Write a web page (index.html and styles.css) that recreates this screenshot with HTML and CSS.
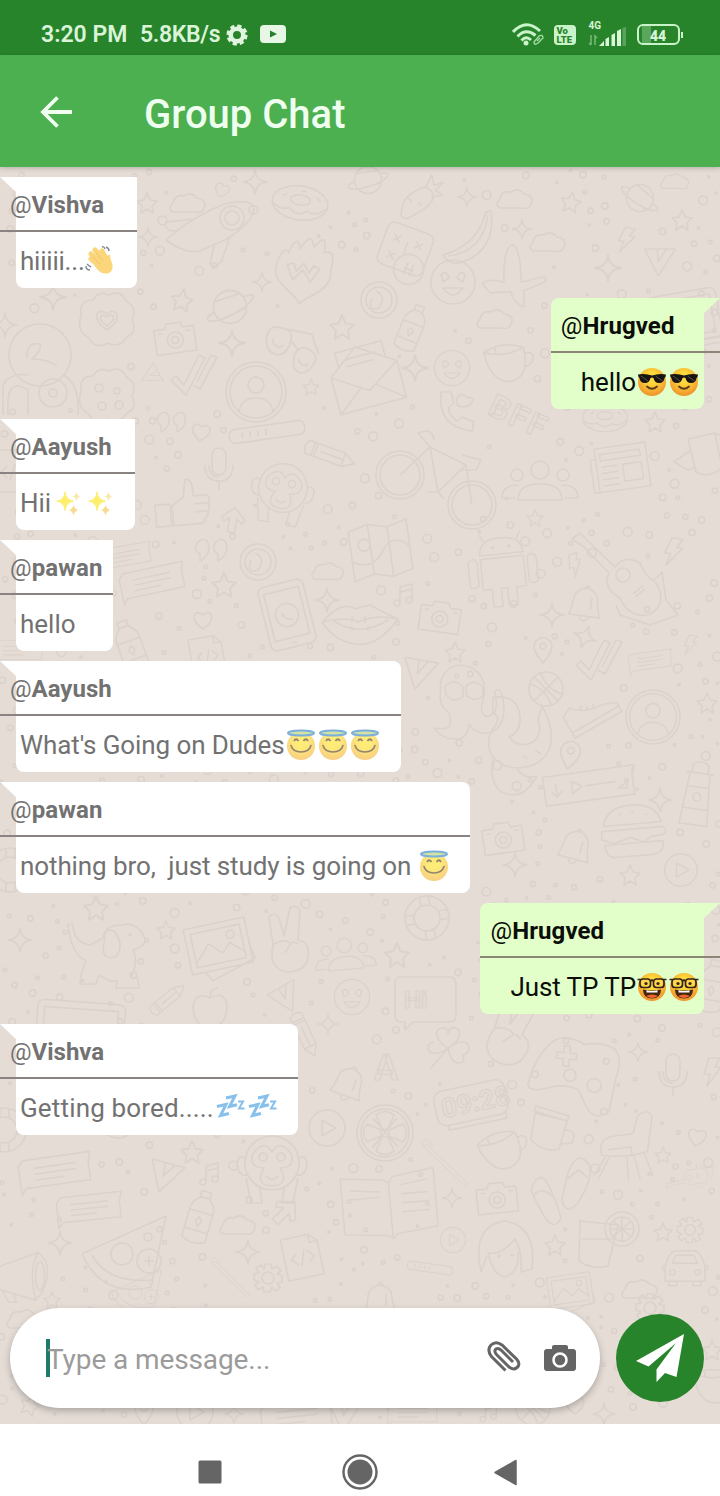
FILE: index.html
```html
<!DOCTYPE html>
<html lang="en">
<head>
<meta charset="utf-8">
<title>Group Chat</title>
<link rel="stylesheet" href="styles.css">
</head>
<body>
<svg class="defs" width="0" height="0" aria-hidden="true">
  <defs>
    <radialGradient id="skin" cx=".5" cy=".35" r=".65"><stop offset=".3" stop-color="#ffd93b"/><stop offset="1" stop-color="#f0922b"/></radialGradient>
    <radialGradient id="skinSoft" cx=".5" cy=".35" r=".65"><stop offset=".3" stop-color="#ffe227"/><stop offset="1" stop-color="#f5b035"/></radialGradient>
    <symbol id="cool" viewBox="0 0 32 32">
      <circle cx="16" cy="16" r="14" fill="url(#skin)"/>
      <path d="M2 8.500Q9 7 16 9.500Q23 7 30 8.500L29.500 11L28.500 12Q28 17 23 17Q18.500 17 17.500 12L16 11.500L14.500 12Q13.500 17 9 17Q4 17 3.500 12L2.500 11Z" fill="#171412"/>
      <path d="M5 10L12 15M19.500 10L26.500 15" stroke="#555" stroke-width="1"/>
      <path d="M11 20.500Q16 25 21 20.500" fill="none" stroke="#5b3b1c" stroke-width="1.800" stroke-linecap="round"/>
    </symbol>
    <symbol id="nerd" viewBox="0 0 32 32">
      <circle cx="16" cy="16" r="14" fill="url(#skin)"/>
      <path d="M7 18.500Q16 20.500 25 18.500Q25 27.500 16 27.500T7 18.500Z" fill="#45250f"/><path d="M10.500 19.300Q16 20.500 21.500 19.300V21.500H10.500Z" fill="#fff"/><path d="M10 25Q16 22 22 25Q16 29 10 25Z" fill="#f0642e"/>
      <g fill="#ffd54a" stroke="#33241c" stroke-width="1.700"><rect x="4" y="8" width="10.500" height="8.500" rx="3"/><rect x="17.500" y="8" width="10.500" height="8.500" rx="3"/><path d="M14.500 10Q16 8.500 17.500 10M1.500 8.500H5M27 8.500H30.500" fill="none"/></g>
      <circle cx="10" cy="12.500" r="1.600" fill="#33241c"/><circle cx="22" cy="12.500" r="1.600" fill="#33241c"/>
    </symbol>
    <symbol id="halo" viewBox="0 0 32 32">
      <circle cx="16" cy="17" r="14" fill="url(#skinSoft)"/>
      <ellipse cx="16" cy="4" rx="13" ry="2.600" fill="#b7d46a" stroke="#2f7fc8" stroke-width="2"/>
      <path d="M9 12Q11 8.500 13.500 12M18.500 12Q21 8.500 23 12" fill="none" stroke="#4f3a14" stroke-width="1.800"/>
      <path d="M6 16.500Q8 23 16 23T26 16.500" fill="none" stroke="#4f3a14" stroke-width="1.600" stroke-linecap="round"/>
    </symbol>
    <symbol id="wave" viewBox="0 0 32 32">
      <g stroke="#f9bd28" stroke-width="5" stroke-linecap="round"><path d="M6 14L15 22M6 9L19 21M10 5L22 19M17 6L23 17"/></g>
      <path d="M11 14L21 13Q24 8 25 10Q25 14 27 18Q29 25 24 28Q17 30 12 24L7 17Z" fill="#fbbd2a"/>
      <path d="M8 12L15 19M11 8L18 16" stroke="#e99c20" stroke-width="1"/>
      <path d="M17 2Q19 1 20 4M21 2Q24 3 24 6M1 21Q1 25 5 25M2 19Q4 21 6 22" stroke="#3c4654" stroke-width="1.500" fill="none"/>
    </symbol>
    <symbol id="spark" viewBox="-4 -1 34 34">
      <path d="M11 4Q12 13 20 14Q12 15 11 24Q10 15 2 14Q10 13 11 4Z" fill="#fbe619" stroke="#fbe619" stroke-width="1"/>
      <path d="M20 18Q21 22.500 25 23.500Q21 25 20 29Q19 25 15 23.500Q19 22.500 20 18Z" fill="#f3c64a"/><path d="M23 4Q23.500 8 27 9Q23.500 10 23 14Q22.500 10 19 9Q22.500 8 23 4Z" fill="#f3dc7a"/>
    </symbol>
    <symbol id="zzz" viewBox="0 0 32 32">
      <g fill="none" stroke="#3f9be0"><path d="M3 14.500L12 12.500L6.500 23.500L15 21.500" stroke-width="3"/><path d="M12 6L21 4L15.500 14.500L23 12.800" stroke-width="3"/><path d="M24 9.500H29L25 16.500H30.500" stroke-width="2"/></g>
    </symbol>

    <g id="d-star"><path d="M0-10L3-3L10-2L5 3L6 10L0 6L-6 10L-5 3L-10-2L-3-3Z"/></g>
    <g id="d-twinkle"><path d="M0-12Q1-1 12 0Q1 1 0 12Q-1 1-12 0Q-1-1 0-12Z"/></g>
    <g id="d-cloud"><path d="M-15 8Q-21 5-15-1Q-13-10-4-8Q3-13 9-6Q20-4 16 4Q14 10 6 8Z"/></g>
    <g id="d-heart"><path d="M0 9C-15-1-8-12 0-5C8-12 15-1 0 9Z"/></g>
    <g id="d-camera"><path d="M-20-10H-9L-7-15H7L9-10H20V15H-20Z"/><circle cy="2" r="8"/><circle cy="2" r="3.500"/><path d="M12-6H17M-16-6H-12"/></g>
    <g id="d-planet"><circle r="15"/><path d="M-14 4C-30 15-14 16 4 6C22-4 28-16 12-9M-13-5L8-12M-9 12L14 1"/></g>
    <g id="d-note"><path d="M-5 8V-8L7-11V5M-5-3L7-6"/><circle cx="-8" cy="8" r="3"/><circle cx="4" cy="5" r="3"/></g>
    <g id="d-bolt"><path d="M-3-14H8L3-5H9L-5 14L-2 2H-8Z"/></g>
    <g id="d-person"><circle r="30"/><circle r="26"/><circle cy="-7" r="8"/><path d="M-17 19Q-14 6 0 6T17 19"/></g>
    <g id="d-people"><circle cy="-12" r="9"/><path d="M-22 18Q-22 2 0 2T22 18Z"/><circle cx="-23" cy="-7" r="6"/><circle cx="23" cy="-7" r="6"/><path d="M-24 16H-38Q-38 3-22 3M24 16H38Q38 3 22 3"/></g>
    <g id="d-checks"><path d="M-24 5L-19 1L-11 10L4-20L10-17L-9 20ZM-2 10L5 14L22-18L16-20L2 7"/></g>
    <g id="d-chat"><path d="M-34-14H34L31-4V14H-34L-39 20V-8Z"/><path d="M-24-5H18M-24 1H18M-24 7H5"/></g>
    <g id="d-pencil"><path d="M-24-7H14L26 0L14 7H-24Q-29 0-24-7ZM14-7V7M-15-7V7M-18-7V7M14 0H-10"/></g>
    <g id="d-mic"><rect x="-7" y="-20" width="14" height="27" rx="7"/><path d="M-14-3Q-14 13 0 13T14-3M-10-3Q-10 9 0 9M0 13V22"/></g>
    <g id="d-thumb"><path d="M-10 0L2-8L5-25Q13-27 12-8H26Q30-4 26 0Q29 4 25 8Q27 12 22 15Q22 20 15 20H-10ZM-27-2H-12V20H-27ZM12 0H26M13 8H25"/></g>
    <g id="d-monkey"><circle r="27"/><path d="M-26-4C-38-14-38 15-25 12M26-4C38-14 38 15 25 12M-20-8Q-8-25 0-11Q8-25 20-8Q22 5 8 5Q18 22 0 23Q-18 22-8 5Q-22 5-20-8Z"/><circle cx="-9" cy="-6" r="4"/><circle cx="9" cy="-6" r="4"/><path d="M-6 13Q0 20 6 13M-26 15L-21 40H-10L-12 24M26 15L21 40H10L12 24"/></g>
    <g id="d-smile"><circle r="22"/><path d="M-12-7Q-7-13-4-4L-10 0ZM12-7Q7-13 4-4L10 0ZM-10 6Q0 20 10 6Z"/></g>
    <g id="d-cookie"><path d="M-26-5Q-28-20-14-20Q-8-30 2-25Q14-31 19-19Q31-13 25 0Q31 12 20 17Q12 29 1 23Q-12 30-18 18Q-31 12-26-5Z"/><circle cx="-8" cy="-8" r="4"/><circle cx="10" cy="-5" r="3"/><circle cx="-5" cy="10" r="4"/><circle cx="12" cy="9" r="4"/></g>
    <g id="d-badge"><path d="M-26-5Q-28-20-14-20Q-8-30 2-25Q14-31 19-19Q31-13 25 0Q31 12 20 17Q12 29 1 23Q-12 30-18 18Q-31 12-26-5Z"/><path d="M0 10C-18-2-9-14 0-6C9-14 18-2 0 10ZM0 6C-11-2-6-8 0-3C6-8 11-2 0 6Z"/></g>
    <g id="d-rocket"><path d="M-44 18Q-20-4 14-18Q42-24 44-14Q44 0 15 18L-8 28Q-22 34-44 18ZM-16-3L-44 0Q-47 3-40 9L-30 8M4 24L0 42Q5 48 12 38L20 15"/><circle cx="22" cy="-4" r="12"/><circle cx="22" cy="-4" r="7"/></g>
    <g id="d-donut"><ellipse rx="28" ry="17"/><ellipse cy="-3" rx="10" ry="5"/><path d="M-27 3Q-18 10-10 6Q0 15 8 7Q18 12 27 2M-18-5L-14-8M16-8L20-4M0-12H5"/></g>
    <g id="d-flame"><path d="M-24-5Q-20-20-15-14Q-10-33-5-19Q3-37 7-22Q18-39 17-18Q28-24 25-4C30 16 5 23 1 31C-5 20-30 16-24-5Z"/><path d="M-15-3L-8 10L0 0L8 10L15-3L9-5L6 2L0-6L-6 2L-9-5Z"/></g>
    <g id="d-glasses"><path d="M-24-5Q-24-18-12-16Q0-16-2-4Q-4 8-12 9Q-24 8-24-5ZM3 9Q5-4 16 0Q27 5 20 16Q12 27 4 18ZM-2-6L6 2M-16-16L16-14L25 3M-18-5A6 6 0 0 0-8 0M8 10A5 5 0 0 0 17 13"/></g>
    <g id="d-envelope"><path d="M-34-8L-3-32L34-8V30H-34ZM-34-8L0 14L34-8M-34 30L-7 9M34 30L7 9M-24-16V-31H24V-16M-16-22H15M-16-15H12"/></g>
    <g id="d-carrot"><path d="M-20-3Q-12-13 8-9Q18-5 12 6Q4 12-20 8Q-29 5-20-3ZM12-7L24-14L20-4L29-1L18 1L21 9L11 4M-8-8V-3M-2 6V1"/></g>
    <g id="d-banana"><path d="M-25 20Q10 10 18-23L23-24Q28 11 0 25Q-18 33-25 20ZM-20 21Q15 17 20-20"/></g>
    <g id="d-plane"><path d="M-31 12Q-24 5-10 7Q-17-28-8-31Q0-31 7 4L25-4Q34-6 30 0L11 12L14 28Q4 26-2 15L-22 20Z"/></g>
    <g id="d-dice"><rect x="-24" y="-23" width="48" height="44" rx="7"/><path d="M-15-12L-8-5M-8-12L-15-5M8-12L15-5M15-12L8-5M-15 6L-8 13M-8 6L-15 13M0-8V6"/><circle cx="10" cy="17" r="15"/><path d="M7 11V23M13 11V23M5 17H15"/></g>
    <g id="d-watch"><circle r="18"/><circle r="13"/><path d="M-3-9Q8-4 0 8Q-12 12-7-2"/></g>
    <g id="d-bottle"><path d="M-5-25H5V-18Q12-13 12-5V24Q0 31-12 24V-5Q-12-13-5-18ZM-5-19H5M-12-4H12M-12 15H12"/><path d="M0 1L3 5L0 11L-3 5Z"/></g>
    <g id="d-cup"><path d="M-20-12Q0-22 20-12Q24 17 4 20Q-16 20-20-12ZM-20-12Q0-4 20-12M21-6Q32-7 27 3Q24 8 17 7M-8-8V-15"/></g>
    <g id="d-phone"><path d="M-16-20Q-20 15 15 19L17 10L5 5L0 9Q-10 1-8-5L-3-9L-6-20Z"/><path d="M0-14Q6-21 10-14Q19-16 14-8Q7-3 0-7Z"/></g>
    <g id="d-bike"><circle cx="-36" cy="0" r="24"/><circle cx="-36" cy="0" r="20"/><circle cx="36" cy="30" r="24"/><circle cx="36" cy="30" r="20"/><path d="M-36 0L-6-28L2 17L30-10L-6-28L-18-42Q-3-48-2-35M30-10L36 30M26-20L45-15L40-5H23M2 17H-8M2 17L8 24"/></g>
    <g id="d-news"><path d="M-28-24H29V25H-28ZM-28-12H-34V25H-28M-23-17H22V-10H-23ZM1-3H22V16H1ZM-23-3H-5M-23 4H-5M-23 11H-5M-23 18H-5"/></g>
    <g id="d-can"><path d="M-12-16L15-22L22 13Q8 24-4 17ZM-9-5L-26 7L-12 15L-4 12M13-22Q28-20 23-2"/></g>
    <g id="d-tablet"><rect x="-22" y="-31" width="44" height="62" rx="6"/><rect x="-17" y="-24" width="34" height="46"/><circle r="11"/><path d="M-5-3Q-2 5 5 5M-2 27H3"/></g>
    <g id="d-lips"><path d="M-38 0Q-18-22-5-13Q0-15 10-17Q24-9 38-3Q18 25-4 22Q-25 20-38 0ZM-38 0Q-12-6-2 0Q15-8 38-3M-26-1Q0 16 28-2M-8-6V0M5-6V1M-8 5V9M8 4V9"/></g>
    <g id="d-map"><path d="M-29-22L-9-27L10-22L30-27V23L10 28L-9 23L-29 28ZM-9-27V23M10-22V28M-29 8Q-10 20 2 2T30 0"/><circle cx="-15" cy="-7" r="6"/></g>
    <g id="d-robot"><path d="M-24-18Q-24-36 0-36T24-18ZM-18-33L-23-42M18-33L23-42M-24-14H24V20H13V40H3V20H-4V40H-14V20H-24ZM-38-12Q-32-18-28-12V15Q-33 20-38 15ZM38-12Q32-18 28-12V15Q33 20 38 15Z"/><circle cx="-9" cy="-26" r="1"/><circle cx="9" cy="-26" r="1"/></g>
    <g id="d-guitar"><path d="M-48-41L-40-47L-31-38L-5-13Q4-26 20-17Q24-5 36 3Q48 22 31 34Q10 40 0 18Q-18 8-11-7L-36-33ZM34 0L42-8L46 20L58 35L30 45L0 35L-4 25"/><circle cx="3" cy="-5" r="7"/><path d="M13 14L23 6M15 17L25 9"/></g>
    <g id="d-bell"><path d="M-15 11Q-12 0-12-6Q-11-15 0-17Q11-15 12-6Q12 0 16 11ZM-4 12Q0 20 5 12M-2-17Q0-22 3-17M6-8V4"/></g>
    <g id="d-cone"><path d="M-17-10L17-10L-2 20ZM-3-10L-2 4L7-10"/></g>
    <g id="d-ball"><circle r="17"/><path d="M-16-5Q0 0 5 16M-5-16Q0 0 16 5M-12 12L12-12M-12-12L12 12"/></g>
    <g id="d-pin"><path d="M0 13C-9 2-11-3-7-9Q0-16 7-9C11-3 9 2 0 13Z"/><circle cy="-4" r="3"/></g>
    <g id="d-shoe"><path d="M-27 10V-7L-17-12Q-7 0 10 1Q27 4 27 10V17H-27ZM-27 11H27M-9-5L-5-8M-3-2L0-5M4 0L6-4"/></g>
    <g id="d-octo"><path d="M-25-10C-29-48 23-48 24-11C23 4 16 10 25 18Q42 18 35-9Q40-15 43-7C55 37 21 47 7 27Q5 42-5 43Q-22 45-32 31Q-7 36-16 14Q-28 5-25-10ZM-20-15Q-10-26 0-14V-4Q-10 5-19-6ZM3-15Q13-25 22-14V-4Q12 3 4-5Z"/><circle cx="-7" cy="-27" r="2"/><circle cx="8" cy="-29" r="3"/></g>
    <g id="d-squid"><path d="M-30-35Q-5-38-3-15Q-2 0-14 5Q-4 17 10 10Q20 3 15-12L19-26Q30-8 28 12Q22 34-4 36Q-20 36-30 25Q-40 10-28-6Q-22-14-30-20ZM-30 27Q-34 50-22 60Q0 70 14 44Q2 48-6 37M0 23L4 27M12 18L18 22"/></g>
    <g id="d-voice"><path d="M-46-14H46L43-5V15H-46ZM-34-6V7M-39 2L-34 8L-29 2M-18-6V6L-8 0ZM-5 0H26M28 7L38 1L36 8Z"/></g>
    <g id="d-burger"><path d="M-29-8Q-25-27 0-27T29-8ZM-31-3H30Q36 2 29 5L18 6L10 11L-3 5L-20 10L-32 5ZM-29 11H29Q30 23 18 24H-19Q-29 24-29 11Z"/><path d="M-13-18L-10-20M0-19L3-21M13-17L16-16"/></g>
    <g id="d-tower"><path d="M-10-22H10L14 30H-14ZM-8-30Q0-37 8-30V-22H-8ZM-14-22H14M-11-8H11M-13 14H13"/><circle cy="2" r="4"/></g>
    <g id="d-dog"><path d="M-37-27Q-34 2-19 9Q-25 22-25 32H-9L-6 23L5 29H12L11 36H34L33 27L26 25Q34 9 28-2Q44-7 39-16Q31-31 16-27Q0-27-2-14L-15-7Q-32-10-32-28Z"/><path d="M0-15Q0-26 10-20Q19-8 12 4Q0 9-2-2Z"/><circle cx="25" cy="-17" r="1"/></g>
    <g id="d-photo"><path d="M-31-22H31V24H-31ZM-25-16H25V18H-25ZM-25 14L-9-3L3 9L12 0L25 12M-18 24L-12 34L34 20L31 8"/><circle cx="14" cy="-8" r="4"/></g>
    <g id="d-peace"><path d="M-15 5L-19-23Q-14-29-9-22L-4-4L2-32Q8-36 12-30L10 0Q23 2 20 18Q17 32-1 32Q-20 29-15 5ZM-15 5Q-5-2 3 3L-3 13M4 2L11 4"/></g>
    <g id="d-apple"><path d="M0-10Q16-18 17-1Q16 15 5 19L0 17L-6 19Q-17 14-17-2Q-14-17 0-10ZM0-10Q0-20 8-20"/></g>
    <g id="d-play"><circle r="18"/><path d="M-5-8V8L9 0Z"/></g>
    <g id="d-laptop"><path d="M-44-23Q-44-30-36-30H36Q44-30 44-23V25H-44ZM-37-23H37V19H-37ZM-53 26H53V32H-53Z"/></g>
    <g id="d-pizza"><path d="M-44 2L36-34L21 37Q-26 48-46 8Q-49 2-44 2ZM-38 5Q-22 34 22 30"/><circle cx="-8" cy="4" r="11"/><circle cx="19" cy="11" r="12"/><circle cx="18" cy="-13" r="4"/><path d="M14 11H24M19 6V16"/></g>
    <g id="d-doc"><path d="M-18-20H10L18-12V22H-18ZM10-20V-12H18M-5-4L-11 2L-5 8M6-4L12 2L6 8M3-6L-2 10"/></g>
    <g id="d-gear"><circle r="6"/><path d="M-3-14H3L4-9L9-12L13-7L9-4L14-2V4L9 5L12 10L7 13L4 9L2 14H-4L-5 9L-10 12L-13 7L-9 4L-14 2V-4L-9-5L-12-10L-7-13L-4-9Z"/></g>
    <g id="d-horn"><path d="M-29-8L18-25Q31-15 28 2T15 28L-28 15ZM18-25Q7-8 15 28M-22 17L-15 30H-6L-10 21"/><ellipse cx="20" cy="1" rx="5" ry="16"/></g>
    <g id="d-buoy"><circle r="22"/><circle r="13"/><path d="M-4-22V-12M5-21V-12M-4 12V22M5 12V21M-21-5H-12M12-5H21M-12 4H-21M12 4H21"/></g>
    <g id="d-hi"><path d="M-25-25H24Q31-25 31-18V13Q31 20 24 20H-12L-20 28V20H-25Q-30 20-30 13V-18Q-30-25-25-25Z"/></g>
    <g id="d-clover"><path d="M0 0C-12-6-15-19-6-20Q0-21 0-14Q1-22 8-20C15-17 11-6 0 0ZM0 0C10-8 21-8 21 0Q21 6 15 7Q18 15 10 15C3 14 1 7 0 0C-9 8-20 6-20 0Q-20-5-14-6M0 0L-17 20"/></g>
    <g id="d-clock"><rect x="-37" y="-18" width="72" height="35" rx="9"/><path d="M-28 17V22H31V14"/></g>
    <g id="d-pad"><path d="M-24-34Q-11-39 4-31Q18-35 33-30Q44-22 38 0L34 34Q20 45 11 31L2 15Q-15 9-30 16Q-50 22-49 12Q-42-22-24-34Z"/><path d="M-16-28V-21H-23V-15H-16V-8H-10V-15H-3V-21H-10V-28Z"/><circle cx="-8" cy="1" r="6"/><circle cx="17" cy="9" r="7"/><circle cx="27" cy="-16" r="3"/></g>
    <g id="d-orange"><circle r="28"/><circle r="24"/><path d="M-3-4L-9-18Q0-25 9-18L3-4ZM-3 4L-9 18Q0 25 9 18L3 4ZM-4-3L-18-9Q-25 0-18 9L-4 3ZM4-3L18-9Q25 0 18 9L4 3ZM-12-15L13 14M12-15L-13 15"/></g>
    <g id="d-mug"><path d="M-17-17L15-9L7 19Q-8 23-21 10ZM-16-24L17-14L15-9L-18-19ZM13 0Q26 0 20 13L8 14"/></g>
    <g id="d-chair"><path d="M-27 2Q-27-10-13-12L9-15L14-35Q27-44 30-33L25 5Q0 13-26 9ZM-17 11L-30 36M-22 11L-35 33M2 11L4 37M10 9L17 36M21 6L31 32M-19 3L7 0L8 9"/></g>
    <g id="d-brush"><path d="M-34-34L36 34L31 38L-39-29ZM-39-29L-42-35L-35-41L-23-31"/></g>
    <g id="d-flip"><path d="M-27 0Q-19-23-9-4Q0 16 3 28Q-4 42-14 26Q-22 12-27 0ZM-24 5Q-17-4-6 6M9-14Q19-44 32-24Q34-8 19 14Q7 26 4 9ZM10-12L21-20L29-13"/></g>
    <g id="d-book"><path d="M-53-30L-5-25L0-21L5-28L51-34V31L5 36L0 41L-5 37L-53 32ZM0-21V41M13-18L43-22M13-8H43M13 2H43M13 12H43M-43-16L-10-12M-43-6H-10"/></g>
    <g id="d-girl"><path d="M-24 22Q-34-24 0-29Q32-24 27 19L16 22Q18 2 10-11Q-4 6-17 3Q-12 25 0 27Q15 22 13 2M-18 6L-24 22"/><circle cx="-6" cy="6" r="1"/><circle cx="7" cy="5" r="1"/></g>
    <g id="d-glass"><path d="M-20-22L18-18L8 23Q-9 27-21 18ZM-18-4H14"/><circle cx="22" cy="-14" r="17"/><circle cx="22" cy="-14" r="12"/><path d="M22-26V-2M10-14H34M13-22L31-6M31-22L13-6"/></g>
    <g id="d-car"><path d="M-22 17H22V0Q18-15 11-17H-11Q-18-15-22 0ZM-14-3H14L10-12H-10ZM-21 0Q-30-3-22 7M21 0Q30-3 22 7M-18 17V22H-9V17M18 17V22H9V17"/><circle cx="-14" cy="7" r="3"/><circle cx="14" cy="7" r="3"/></g>
    <g id="d-quote"><path d="M-15-7Q-5-16-3-3Q-3 6-12 11L-12 4Q-19 0-15-7ZM3-7Q13-16 15-3Q15 6 6 11V4Q-1 0 3-7Z"/></g>
    <g id="d-arrow"><path d="M-4 14V-2L-10 3L-13-2L0-14L13-2L10 3L4-2V14Z"/></g>
    <g id="d-pass"><rect x="-38" y="-7" width="76" height="14" rx="6"/><path d="M-25-3V3M-17-3V3M-9-3V3M-1-3V3"/></g>
  </defs>
</svg>

<div class="phone">
  <header class="status">
    <span class="time">3:20 PM</span>
    <span class="rate">5.8KB/s</span>
    <svg class="gear" width="22" height="22" viewBox="-11 -11 22 22"><circle r="6.300" fill="none" stroke="#e0f5df" stroke-width="4.600"/><circle r="9" fill="none" stroke="#e0f5df" stroke-width="3.200" stroke-dasharray="4.200 2.869"/></svg>
    <svg class="video" width="26" height="18" viewBox="0 0 26 18"><rect width="26" height="18" rx="4" fill="#e6f7e6"/><path d="M10 5.500L17 9L10 12.500Z" fill="#287f2a"/></svg>
    <svg class="wifi" width="32" height="24" viewBox="0 0 32 24"><g fill="none" stroke="#c9f3c8" stroke-width="3"><path d="M1 9Q14-5 28 8"/><path d="M5.500 13.500Q14 4.500 23.500 12.500"/><path d="M9.500 17.500Q14 12.500 19 17"/></g><circle cx="14" cy="20" r="2.500" fill="#c9f3c8"/><path d="M22 19L27 13Q31 11 31 15L26 20Q22 23 22 19ZM25 18L28 15" fill="#28842b" stroke="#9edb9e" stroke-width="1.400"/></svg>
    <span class="volte"><span>Vo</span><span>LTE</span></span>
    <span class="signal"><span class="net">4G</span>
      <svg width="38" height="20" viewBox="0 0 38 20"><path d="M3 8V18M1 16L3 18M7 18V9L9 11" stroke="#78b97a" stroke-width="1.500" fill="none"/><g fill="#d8f8d8"><path d="M11 19L16 14V19Z"/><path d="M17.500 12L21 10V19H17.500ZM23.500 8L27 6V19H23.500ZM29 4L33 2V19H29Z"/></g><path d="M34.500 1L38 0V19H34.500Z" fill="#58a45b"/></svg></span>
    <span class="battery"><b>44</b></span><i class="cap"></i>
  </header>

  <div class="appbar">
    <svg width="32" height="32" viewBox="0 0 32 32" fill="none" stroke="#f0fff0" stroke-width="3.800"><path d="M32 16H3M17.500 1.500L3 16L17.500 30.500"/></svg>
    <h1>Group Chat</h1>
  </div>

  <main class="chat">
    <svg class="wallpaper" id="wallpaper" width="720" height="1257" viewBox="0 167 720 1257" aria-hidden="true"></svg>
    <section class="thread">
      <article class="msg in square tight"><h2><i>@</i>Vishva</h2><p><span>hiiiii...</span><svg><use href="#wave"/></svg></p></article>
      <article class="msg out"><h2><i>@</i>Hrugved</h2><p><span>hello</span><svg><use href="#cool"/></svg><svg><use href="#cool"/></svg></p></article>
      <article class="msg in square"><h2><i>@</i>Aayush</h2><p><span>Hii</span><svg><use href="#spark"/></svg><svg><use href="#spark"/></svg></p></article>
      <article class="msg in square"><h2 class="spaced"><i>@</i>pawan</h2><p><span>hello</span></p></article>
      <article class="msg in snug"><h2><i>@</i>Aayush</h2><p><span>What's Going on Dudes</span><svg><use href="#halo"/></svg><svg><use href="#halo"/></svg><svg><use href="#halo"/></svg></p></article>
      <article class="msg in snug"><h2 class="spaced"><i>@</i>pawan</h2><p><span>nothing bro,&nbsp; just study is going on&nbsp;</span><svg><use href="#halo"/></svg></p></article>
      <article class="msg out"><h2><i>@</i>Hrugved</h2><p><span>Just TP TP</span><svg><use href="#nerd"/></svg><svg><use href="#nerd"/></svg></p></article>
      <article class="msg in loose"><h2><i>@</i>Vishva</h2><p><span>Getting bored.....</span><svg><use href="#zzz"/></svg><svg><use href="#zzz"/></svg></p></article>
    </section>
    <footer class="composer">
      <div class="field">
        <i class="caret"></i><span class="hint">Type a message...</span>
        <svg class="clip" width="34" height="32" viewBox="0 0 34 32" fill="none" stroke="#656565" stroke-width="3" stroke-linecap="butt"><path d="M18.500 29.500L4.500 15.500Q-.5 9 4 4Q9-.5 15 4L29.500 18Q34 23 30 26.500Q26 30 21 25L9.500 13.500Q6.500 10 9 8Q11.500 6.500 14.500 9.500L26 21"/></svg>
        <svg class="cam" width="32" height="26" viewBox="0 0 32 26"><path d="M3 4H8V2Q8 0 10 0H22Q24 0 24 2V4H29Q32 4 32 7V23Q32 26 29 26H3Q0 26 0 23V7Q0 4 3 4Z" fill="#656565"/><circle cx="16" cy="15" r="6.500" fill="#656565" stroke="#fff" stroke-width="2.600"/></svg>
      </div>
      <div class="send"><svg width="48" height="48" viewBox="0 0 48 48"><path d="M48 0L0 27L12.500 32.500L40 9L20.500 35.500V48L29 39L40.500 43Z" fill="#fff"/></svg></div>
    </footer>
  </main>

  <nav class="keys">
    <svg width="24" height="24" viewBox="0 0 24 24"><rect x=".5" y=".5" width="23" height="23" rx="1.500" fill="#656565"/></svg>
    <svg class="home" width="36" height="36" viewBox="0 0 36 36"><circle cx="18" cy="18" r="16.500" fill="none" stroke="#656565" stroke-width="2.400"/><circle cx="18" cy="18" r="12.500" fill="#656565"/></svg>
    <svg width="24" height="27" viewBox="0 0 24 27"><path d="M1 13.500L22 1.500V25.500Z" fill="#656565" stroke="#656565" stroke-width="1.500" stroke-linejoin="round"/></svg>
  </nav>
</div>
<script src="wallpaper.js"></script>
</body>
</html>
```

FILE: styles.css
```css
* { box-sizing: border-box; }
body { margin: 0; font-family: Roboto, "Noto Sans", sans-serif; background: #fff; }
h1, h2, p { margin: 0; font-weight: normal; }
i { font-style: normal; }
.defs { position: absolute; }
.phone { width: 720px; height: 1496px; display: flex; flex-direction: column; overflow: hidden; }

.status { height: 55px; background: #28842b; display: flex; align-items: center; padding: 14px 39px 0 41px; color: #d9f4d8; font-size: 23px; font-weight: 600; white-space: nowrap; }
.time { width: 99px; }
.rate { width: 84px; letter-spacing: -.35px; }
.gear { margin-left: 2px; }
.video { margin-left: 12px; margin-top: -2px; }
.wifi { margin-left: auto; margin-right: 10px; }
.volte { width: 22px; height: 20px; border-radius: 4px; background: #c9f3c8; color: #28842b; display: flex; flex-direction: column; font-size: 9.500px; line-height: 9px; font-weight: 900; padding: 1px 0 0 3px; }
.signal { width: 38px; height: 30px; margin: -8px 11px 0 12px; display: flex; flex-direction: column; }
.net { font-size: 10px; line-height: 10px; font-weight: 700; padding-left: 1px; height: 15px; padding-top: 5px; }
.signal svg { display: block; margin-top: -4px; flex: none; }
.battery { width: 43px; height: 21px; border: 2.500px solid #c9f3c8; border-radius: 6px; display: grid; place-items: center; font-size: 14px; line-height: 18px; padding-top: 1px; background: linear-gradient(90deg, transparent 3px, #5aa65c 3px, #5aa65c 12px, transparent 12px); }
.cap { width: 2.500px; height: 6px; background: #c9f3c8; margin: 0 -2px 0 1px; }

.appbar { height: 112px; background: #4caf50; display: flex; align-items: center; padding: 1px 40px 0; position: relative; z-index: 1; box-shadow: 0 1px 5px rgba(0, 0, 0, .22); }
.appbar h1 { margin-left: 72px; padding-top: 6px; font-size: 40px; font-weight: 500; line-height: 48px; color: #efffef; }

.chat { height: 1257px; background: #e5dcd6; display: flex; flex-direction: column; justify-content: space-between; position: relative; overflow: hidden; }
.wallpaper { position: absolute; inset: 0; fill: none; stroke: #dbd2cb; stroke-width: 1.600; stroke-linejoin: round; font-family: Roboto, sans-serif; }
.thread { position: relative; padding-top: 10px; display: flex; flex-direction: column; align-items: flex-start; gap: 10px; }

.msg { height: 111px; position: relative; display: flex; flex-direction: column; color: #727272; isolation: isolate; }
.msg::before, .msg::after { content: ""; position: absolute; z-index: -1; background: #fff; }
.msg::before { inset: 0 0 0 16px; border-radius: 0 8px 8px 8px; }
.msg::after { top: 0; left: 0; width: 17px; height: 16px; clip-path: polygon(0 0, 100% 0, 100% 100%); }
.msg.square::before { border-top-right-radius: 1px; }
.msg h2 { height: 55px; border-bottom: 2px solid #898482; padding: 2px 10px 0; font-size: 24px; font-weight: 700; line-height: 53px; white-space: nowrap; }
.msg h2.spaced { letter-spacing: .15px; }
.msg h2 i { font-weight: 400; }
.msg p { height: 56px; padding: 1px 20px 0; display: flex; align-items: center; font-size: 26px; line-height: 56px; white-space: nowrap; }
.msg p span { padding-top: 1px; }
.msg p svg { width: 32px; height: 32px; flex: none; opacity: .62; }
.msg.tight p { letter-spacing: -.22px; }
.msg.snug p { letter-spacing: -.1px; }
.msg.loose p { letter-spacing: .16px; }
.msg.out { align-self: flex-end; color: #0b0d09; }
.msg.out::before, .msg.out::after { background: #e2ffc9; }
.msg.out::before { inset: 0 16px 0 0; border-radius: 8px 0 8px 8px; }
.msg.out::after { left: auto; right: 0; clip-path: polygon(0 0, 100% 0, 0 100%); }
.msg.out h2 { border-color: #8a8779; letter-spacing: .1px; }
.msg.out p { padding-left: 30px; letter-spacing: -.08px; }
.msg.out p svg { opacity: 1; }

.composer { position: relative; height: 116px; padding: 0 16px 16px 10px; display: flex; align-items: center; justify-content: space-between; }
.field { width: 590px; height: 100px; border-radius: 50px; background: #fff; display: flex; align-items: center; padding: 0 24px 0 36px; box-shadow: 0 3px 7px rgba(0, 0, 0, .25); }
.caret { width: 4px; height: 38px; background: #1d7c69; }
.hint { color: #9b9b9b; font-size: 28px; letter-spacing: -.1px; margin-left: -3px; padding-top: 2px; }
.clip { margin-left: auto; margin-right: 23px; margin-top: -3px; }
.send { width: 88px; height: 88px; border-radius: 50%; background: #28842b; display: grid; place-items: center; }

.keys { height: 72px; background: #fff; display: flex; align-items: center; padding: 24px 202px 0 198px; justify-content: space-between; }
.home { margin-left: 3px; }
```

FILE: wallpaper.js
```js
// Doodles as: shape, x, y, scale, rotation
const doodles = `
cloud 188 204 1 0|rocket 210 222 1 0|heart 222 190 .8 20|star 147 203 1 0|star 182 300 1.1 10|donut 300 203 1 8|twinkle 255 182 1 0
twinkle 262 282 .8 0|twinkle 148 237 .8 0|flame 303 270 1.1 8|planet 230 307 1.1 0|camera 175 338 1 -8|twinkle 232 343 1.1 0|badge 107 320 1 0
glasses 292 347 1.1 8|star 342 327 1.2 0|checks 195 375 1 0|person 256 392 1 0|star 311 387 .8 0|cookie 107 396 1 0|cone 153 375 .6 60
quote 172 422 .9 0|heart 201 432 1 10|pass 267 432 1 -8|pencil 330 455 1 20|mic 219 468 1 0|thumb 182 505 1 -5|monkey 283 488 .9 10|arrow 233 520 .9 10
twinkle 53 297 1.1 0|envelope 366 377 1 -15|planet 368 180 .9 10|carrot 420 200 1 -35|banana 468 235 1 0|cloud 515 200 1 0|star 571 202 1 10
planet 640 198 .9 60|cloud 675 182 .8 0|star 682 220 1 0|bolt 626 240 .9 10|twinkle 467 197 .8 0|twinkle 522 229 .8 0|twinkle 608 268 1.1 0
dice 405 250 1 20|smile 453 282 1 0|plane 515 277 1 10|cloud 548 243 1 0|watch 379 300 1 0|bottle 412 327 .9 22|cloud 495 320 1 0|cup 505 362 1 -8
smile 452 368 .8 0|phone 457 412 1 0|cone 660 258 .9 0|laptop 680 320 .9 -10|twinkle 415 368 1.1 0|bike 436 475 1 0|people 540 482 1 0|news 622 467 .9 -8
can 700 455 1 0|donut 605 418 .8 0|star 655 422 1 0|star 535 518 .8 0|chat 155 580 .9 -12|chat 128 555 .7 -10|watch 258 562 1 0|quote 212 550 1 0
star 224 585 1.2 0|cloud 328 572 .9 0|tablet 287 615 1.05 -14|lips 360 622 1 0|doc 207 655 .9 -10|bottle 130 645 1 -20|heart 203 620 1 0|twinkle 327 600 1 0
map 380 550 1 -8|robot 503 570 .9 -6|camera 440 617 1 8|note 405 595 1 0|guitar 620 580 1 0|bell 585 605 1 8|twinkle 552 615 1 0|twinkle 585 637 1 20
checks 600 660 1 0|chat 652 660 .6 -8|bolt 673 552 1 8|bolt 690 645 .7 10|bolt 575 565 .8 -20|star 455 652 1 0|pin 543 650 1 0|cone 420 670 1 10
octo 463 700 .9 0|ball 546 689 1 0|shoe 590 710 1 -30|person 653 717 .9 0|star 707 703 1 0|squid 523 732 1 0|pin 570 755 1.1 10|voice 590 785 1 -8
tower 697 795 1 8|burger 633 832 1 -5|twinkle 660 800 1 0|camera 503 838 1 -8|bell 575 848 1 15|play 681 870 .9 0|star 630 875 1 0|twinkle 515 865 1 0
bell 375 700 1.1 -20|twinkle 5 325 1 0|buoy 10 870 1 0|star 96 908 1.2 0|dog 105 952 1 0|star 166 930 .9 0|photo 218 945 1 -12
peace 288 940 1 0|people 345 955 .8 -5|pencil 168 999 .8 -40|apple 210 1008 1 0|cone 285 995 .9 -30|laptop 80 1032 1 4|smile 352 997 .8 0|twinkle 328 1024 .8 0
chat 58 1170 1 -8|chat 92 1207 .9 -6|star 192 1152 1.1 0|cone 166 1173 1 15|note 211 1174 1 0|monkey 272 1163 1 0|bottle 200 1216 1 16|pizza 130 1250 1 0
cloud 238 1226 1 0|doc 302 1256 1 -12|arrow 285 1212 1 45|play 327 1128 1 0|brush 232 1278 .5 0|gear 268 1278 1 0|twinkle 248 1252 1 0|twinkle 60 1243 1 0
horn 22 1275 .9 0|play 118 1120 1 0|buoy 4 1130 1 0|buoy 427 918 1 -10|star 397 955 1.2 0|hi 425 1002 1 0|clover 448 1048 1 0|clock 472 1103 1 -12
peace 512 1030 1.1 25|pad 578 1075 1 5|mic 673 1074 1 0|orange 385 1133 1 0|cup 500 1150 1 -20|mug 552 1130 1 0|chair 625 1147 .9 0|brush 447 1164 .6 0
flip 558 1190 1 0|camera 497 1198 1 -6|book 390 1202 .9 -5|girl 505 1250 1 0|glass 600 1243 1 0|star 555 1245 1 0|guitar 690 1180 .4 -60|gear 690 1230 .9 0
star 663 1232 .9 0|car 685 1266 .9 0|pass 430 1268 .6 8|play 453 1240 .7 0|twinkle 638 1052 .8 0|bolt 712 1072 1 0|twinkle 452 1198 .8 0|star 663 1155 .8 0
heart 697 1137 1 10|bell 348 1085 1 20|pencil 305 1035 .9 65|twinkle 20 940 1 0|photo 570 1290 .7 -8|cloud 640 1290 1 0|gear 650 1308 1 0
cloud 25 1320 1 0|star 52 1300 .8 0|pin 144 1412 1 0|play 195 1412 1 0|twinkle 234 1414 .8 0|chat 300 1415 1 -6|cone 345 1412 1 0|chat 415 1412 .7 0|note 490 1412 .9 0
ball 533 1408 1 0|heart 575 1405 1 0|twinkle 604 1414 .9 0|star 30 1405 1 20|bell 380 1302 1 0|pizza 140 1290 .6 0|doc 12 470 1 0|chat 20 650 .7 0|bottle 712 985 1 10|star 712 1350 1 0|cup 712 1385 .9 0`
  .trim().split(/[|\n]/).map(s => s.split(' ').map((v, i) => i ? Number(v) : v));

const small = 'star twinkle heart note bolt pin quote arrow'.split(' ');
const taken = doodles.map(([n, x, y, s]) => [x, y, (small.includes(n) ? 12 : n === 'bike' ? 52 : n === 'cloud' || n === 'cone' ? 20 : 30) * s]);
taken.push([40, 370, 42], [520, 415, 28], [387, 1065, 18]);
let out = doodles.map(([n, x, y, s, r]) => `<use href="#d-${n}" transform="translate(${x} ${y}) rotate(${r}) scale(${s})"/>`).join('');

out += '<circle cx="40" cy="355" r="31"/><path d="M27 358Q26 342 40 344Q42 350 32 359Q47 359 57 366"/><path d="M3 415V385Q10 372 28 375M28 415V390Q10 378 8 400V415M64 375Q80 385 78 415"/><circle cx="53" cy="393" r="14"/><circle cx="53" cy="393" r="4"/>';
out += '<g font-weight="700" stroke-width="1.2"><text x="404" y="1008" font-size="24">Hi</text><text x="374" y="1080" font-size="36">A</text><text x="441" y="1112" font-size="27" transform="rotate(-12 472 1103)">09:28</text><text x="488" y="424" font-size="32" letter-spacing="2" transform="rotate(25 510 415)">BFF</text></g>';

// Fill the gaps with little rings, from a fixed seed so they never move
let seed = 77;
const rand = () => (seed = (seed * 16807) % 2147483647) / 2147483647;
for (let i = 0; i < 3600; i++) {
  const x = rand() * 720, y = 170 + rand() * 1250, r = [1.2, 1.8, 2.6, 3.2, 4.4][Math.floor(rand() * 5)];
  if (taken.every(([a, b, c]) => Math.hypot(x - a, y - b) > c + r + 3)) {
    taken.push([x, y, r + 5]);
    out += `<circle cx="${x.toFixed(1)}" cy="${y.toFixed(1)}" r="${r}"/>`;
  }
}
document.getElementById('wallpaper').innerHTML = out;
```
